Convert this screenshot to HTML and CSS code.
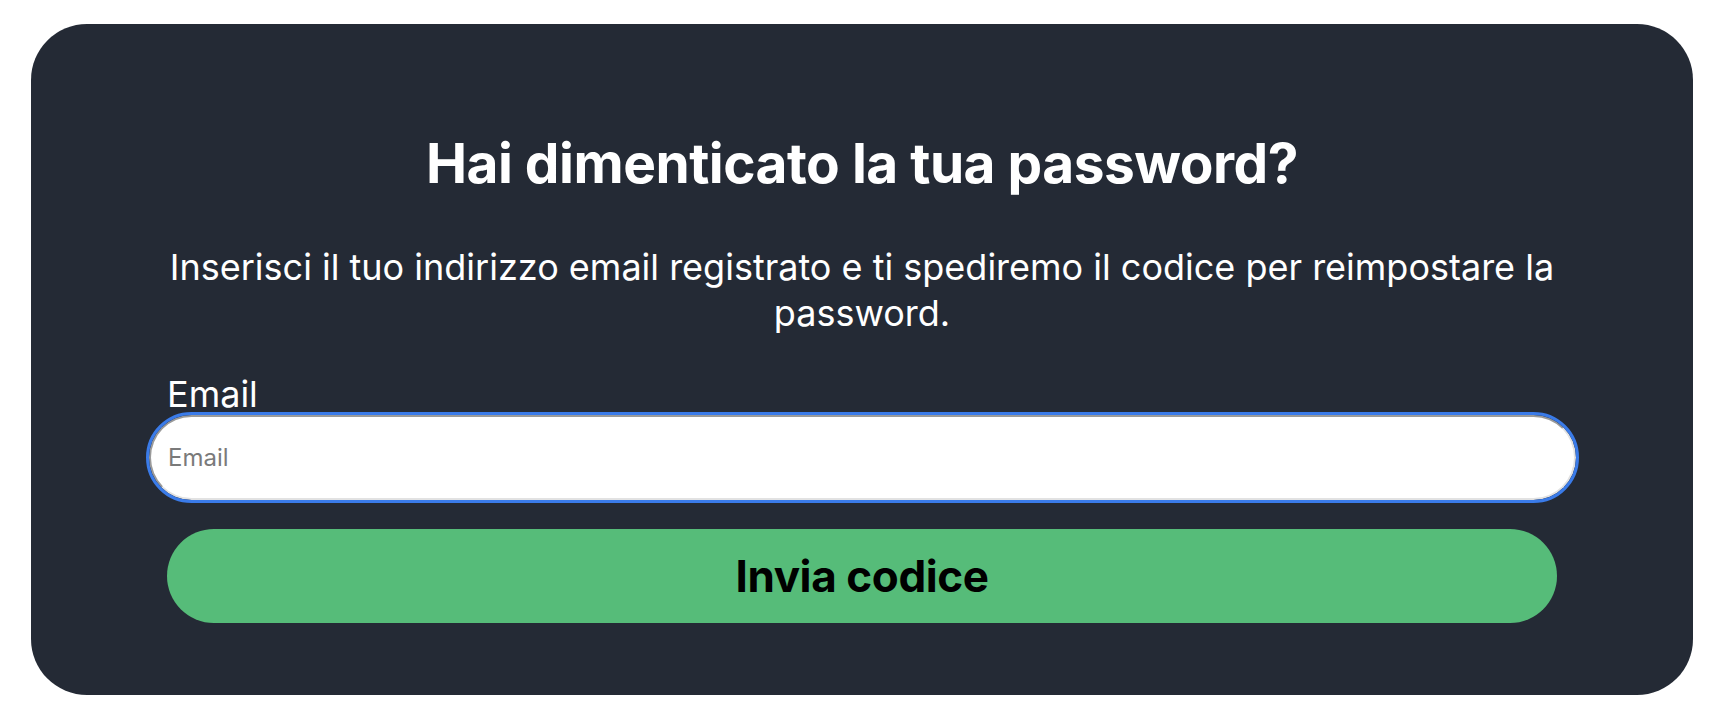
FILE: index.html
```
<!DOCTYPE html>
<html lang="it">
<head>
<meta charset="utf-8">
<title>Password dimenticata</title>
<link rel="stylesheet" href="styles.css">
</head>
<body>
<main class="card">
  <h1 class="title">Hai dimenticato la tua password?</h1>
  <p class="intro">Inserisci il tuo indirizzo email registrato e ti spediremo il codice per reimpostare la password.</p>
  <form class="form">
    <label class="label" for="email">Email</label>
    <input class="field" id="email" type="email" placeholder="Email" autofocus>
    <button class="submit" type="button">Invia codice</button>
  </form>
</main>
</body>
</html>
```
FILE: styles.css
```
html, body {
  margin: 0;
  padding: 0;
  background: #ffffff;
}
body {
  font-family: Inter, "Noto Sans", sans-serif;
}
.card {
  box-sizing: border-box;
  margin: 24px 25px 0 31px;
  height: 671px;
  background: #242a35;
  border-radius: 56px;
  padding: 106px 136px 72px;
  display: flex;
  flex-direction: column;
}
.title {
  margin: 0;
  color: #ffffff;
  font-size: 55px;
  line-height: 66px;
  font-weight: 700;
  letter-spacing: -0.5px;
  text-align: center;
}
.intro {
  margin: 48px 0 0;
  color: #ffffff;
  font-size: 36px;
  line-height: 46px;
  font-weight: 400;
  text-align: center;
}
.form {
  margin-top: 38px;
  display: flex;
  flex-direction: column;
}
.label {
  color: #ffffff;
  font-size: 36px;
  line-height: 41px;
  margin-left: 0;
}
.field {
  box-sizing: border-box;
  width: calc(100% + 37px);
  margin-left: -18px;
  height: 85px;
  padding: 0 0 0 17px;
  border-width: 2px;
  border-style: solid;
  border-color: #9a9a9a #e2e2e2 #e2e2e2 #9a9a9a;
  border-radius: 43px;
  background: #ffffff;
  outline: 3px solid #3a7be9;
  outline-offset: 0;
  font-family: Inter, "Noto Sans", sans-serif;
  font-size: 24px;
  color: #222;
  caret-color: #000;
}
.field::placeholder {
  color: #7a7a7a;
}
.submit {
  margin-top: 29px;
  height: 94px;
  border: 0;
  border-radius: 47px;
  background: #56bc79;
  color: #000000;
  font-family: Inter, "Noto Sans", sans-serif;
  font-size: 44px;
  font-weight: 700;
  letter-spacing: -0.4px;
  cursor: pointer;
}
```
